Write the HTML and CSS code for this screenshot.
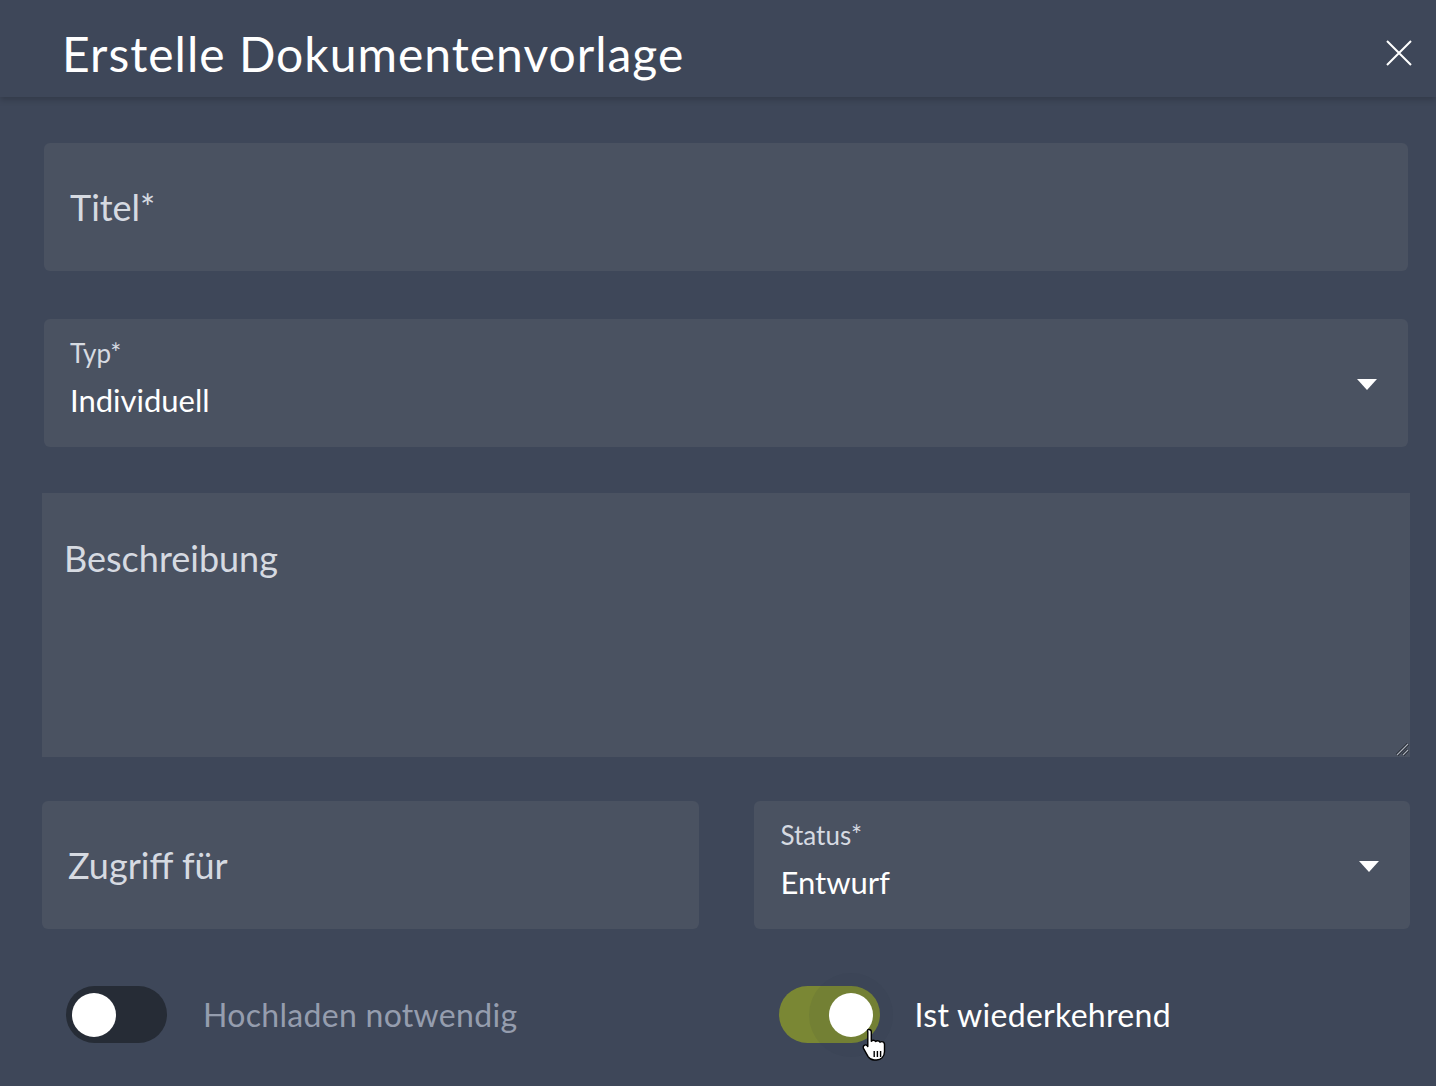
FILE: index.html
```html
<!DOCTYPE html>
<html lang="de">
<head>
    <meta charset="UTF-8">
    <meta name="viewport" content="width=device-width, initial-scale=1.0">
    <title>Erstelle Dokumentenvorlage</title>
    <link rel="stylesheet" href="styles.css">
</head>
<body>
    <header class="dialog-header">
        <h1>Erstelle Dokumentenvorlage</h1>
        <button class="close-btn" aria-label="Schließen">
            <svg width="26" height="26" viewBox="0 0 26 26"><path d="M1 1L25 25M25 1L1 25" stroke="#fff" stroke-width="2" fill="none"/></svg>
        </button>
    </header>

    <main class="dialog-body">
        <div class="field field-inset">
            <span class="placeholder">Titel*</span>
        </div>

        <div class="field field-inset field-select">
            <div class="select-text">
                <span class="label">Typ*</span>
                <span class="value">Individuell</span>
            </div>
            <span class="arrow"></span>
        </div>

        <div class="field field-area">
            <span class="placeholder">Beschreibung</span>
            <svg class="resize" width="14" height="14" viewBox="0 0 14 14">
                <path d="M2 13L13 2M8 13L13 8" stroke="#1f232b" stroke-width="3" fill="none"/>
                <path d="M2 13L13 2M8 13L13 8" stroke="#aab0bb" stroke-width="1.2" fill="none"/>
            </svg>
        </div>

        <div class="row">
            <div class="field field-half">
                <span class="placeholder">Zugriff für</span>
            </div>
            <div class="field field-half field-select status">
                <div class="select-text">
                    <span class="label">Status*</span>
                    <span class="value">Entwurf</span>
                </div>
                <span class="arrow"></span>
            </div>
        </div>

        <div class="row toggles">
            <label class="switch-line">
                <span class="switch"><span class="knob"></span></span>
                <span class="switch-label muted">Hochladen notwendig</span>
            </label>
            <label class="switch-line on">
                <span class="switch"><span class="knob"></span>
                    <svg class="cursor" width="30" height="36" viewBox="0 0 30 36">
                        <path d="M7 2.5c1.3 0 2.3 1 2.3 2.3v9.4c.5-.6 1.3-1 2.1-1 1 0 1.8.5 2.2 1.3.5-.5 1.2-.8 2-.8 1.1 0 2 .6 2.4 1.5.5-.4 1.1-.6 1.7-.6 1.6 0 2.8 1.3 2.8 2.8v7.4c0 4.6-3.4 8.2-8 8.2h-2.4c-2.6 0-4.6-1.2-6-3.3L1.6 21.6c-.7-1.1-.4-2.6.7-3.3 1-.6 2.3-.4 3 .5l.5.7V4.8C4.8 3.5 5.8 2.5 7 2.5z" fill="#fff" stroke="#000" stroke-width="1.4" stroke-linejoin="round"/>
                        <path d="M12.2 24v6M15.4 24v6M18.6 24v6" stroke="#000" stroke-width="1.4"/>
                    </svg>
                </span>
                <span class="switch-label">Ist wiederkehrend</span>
            </label>
        </div>
    </main>
</body>
</html>
```

FILE: styles.css
```css
:root {
    --hintergrund: #3e4759;
    --feld: #4a5261;
    --text: #ffffff;
    --text-hell: #d6dae1;
    --text-grau: #959dae;
    --schalter-aus: #262c36;
    --oliv: #7a8734;
}

* {
    box-sizing: border-box;
}

body {
    margin: 0;
    height: 1086px;
    overflow: hidden;
    font-family: Lato, "Open Sans", Arial, sans-serif;
    background-color: var(--hintergrund);
    color: var(--text);
}

.dialog-header {
    height: 97px;
    display: flex;
    align-items: center;
    justify-content: space-between;
    padding: 0 24px 0 62px;
    background-color: var(--hintergrund);
    box-shadow: 0 3px 6px rgba(0, 0, 0, 0.18);
    position: relative;
}

.dialog-header h1 {
    margin: 0;
    font-size: 48px;
    font-weight: 400;
    letter-spacing: 1px;
    padding-top: 10px;
}

.close-btn {
    background: none;
    border: none;
    padding: 0;
    width: 26px;
    height: 26px;
    display: flex;
    margin-top: 9px;
}

.dialog-body {
    padding: 46px 26px 0 42px;
    display: flex;
    flex-direction: column;
}

.field {
    background-color: var(--feld);
    border-radius: 6px;
    height: 128px;
    display: flex;
    align-items: center;
    position: relative;
}

.field-inset {
    margin: 0 2px;
    padding-left: 26px;
}

.field-inset + .field-inset {
    margin-top: 48px;
}

.placeholder {
    font-size: 36px;
    color: var(--text-hell);
}

.field-select {
    justify-content: space-between;
    align-items: flex-start;
    padding-right: 31px;
}

.select-text {
    display: flex;
    flex-direction: column;
    padding-top: 19px;
}

.label {
    font-size: 26px;
    color: var(--text-hell);
    line-height: 30px;
}

.value {
    font-size: 31px;
    line-height: 44px;
    margin-top: 10px;
}

.arrow {
    align-self: center;
    width: 0;
    height: 0;
    border-left: 10.5px solid transparent;
    border-right: 10.5px solid transparent;
    border-top: 11px solid #fff;
    margin-top: 2px;
}

.field-area {
    margin-top: 46px;
    height: 264px;
    border-radius: 0;
    align-items: flex-start;
    padding: 43px 0 0 22px;
}

.resize {
    position: absolute;
    right: 1px;
    bottom: 1px;
}

.row {
    display: grid;
    grid-template-columns: 1fr 1fr;
    column-gap: 55px;
    margin-top: 44px;
}

.field-half {
    padding-left: 26px;
}

.status {
    padding-left: 27px;
}

.toggles {
    margin-top: 57px;
}

.switch-line {
    display: flex;
    align-items: center;
    gap: 36px;
    padding-left: 24px;
}

.switch-line.on {
    padding-left: 25px;
    gap: 35px;
}

.switch {
    width: 101px;
    height: 57px;
    border-radius: 29px;
    background-color: var(--schalter-aus);
    display: flex;
    align-items: center;
    padding: 0 6px;
    position: relative;
}

.knob {
    width: 44px;
    height: 44px;
    border-radius: 50%;
    background-color: #fff;
}

.on .switch {
    background-color: var(--oliv);
    justify-content: flex-end;
    padding: 0 7px;
}

.on .knob {
    box-shadow: 0 0 0 20px rgba(40, 50, 70, 0.08);
}

.cursor {
    position: absolute;
    left: 83px;
    top: 41px;
}

.switch-label {
    font-size: 32px;
    letter-spacing: 0.3px;
}

.muted {
    color: var(--text-grau);
}
```
